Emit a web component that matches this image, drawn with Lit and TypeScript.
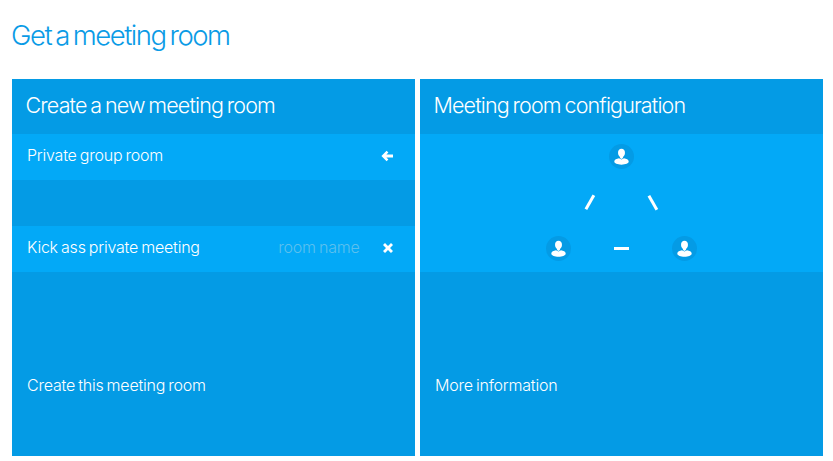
import { LitElement, html, css } from "lit";
import { customElement } from "lit/decorators.js";

const avatar = html`<svg class="avatar" viewBox="0 0 26 26" aria-hidden="true">
  <circle cx="13" cy="13" r="13" fill="#049be5"></circle>
  <path fill="#fff" d="M13 5c2.400 0 3.600 1.800 3.600 4 0 2-.9 3.700-2.100 4.500v1.100L13 15.500l-1.500-.9v-1.100C10.300 12.700 9.400 11 9.400 9c0-2.200 1.200-4 3.600-4zM10.400 14.800l2.600 1.400 2.600-1.400c2.400.4 4.900 1.500 4.900 3.500 0 2-3.200 3.200-7.500 3.200s-7.500-1.200-7.500-3.200c0-2 2.500-3.100 4.900-3.500z"></path>
</svg>`;

@customElement("app-root")
export class AppRoot extends LitElement {
  static styles = css`
    :host {
      display: block;
      background: #fff;
      font-family: "Inter", "Liberation Sans", sans-serif;
      font-weight: 300;
      color: #fff;
      height: 461px;
      overflow: hidden;
    }
    h1 {
      margin: 0;
      padding: 18px 0 0 11px;
      height: 79px;
      box-sizing: border-box;
      font-size: 27.5px;
      line-height: 34px;
      font-weight: 300;
      letter-spacing: -1.5px;
      word-spacing: -2.2px;
      color: #0a9be6;
    }
    .panels {
      display: grid;
      grid-template-columns: 403px 403px;
      gap: 5px;
      padding-left: 12px;
    }
    .panel {
      background: #049be5;
      height: 377px;
      display: flex;
      flex-direction: column;
    }
    h2 {
      margin: 0;
      height: 55px;
      padding-left: 13.5px;
      font-size: 21.5px;
      line-height: 53px;
      font-weight: 300;
      letter-spacing: -0.85px;
      word-spacing: -1.5px;
    }
    .rows {
      display: grid;
      grid-template-rows: repeat(3, 46px);
    }
    .row {
      display: flex;
      align-items: center;
      box-sizing: border-box;
      padding: 0 21.5px 2px 15px;
      font-size: 16px;
      letter-spacing: -0.22px;
      word-spacing: -1.1px;
    }
    .bright { background: #03a9f7; }
    .grow { flex: 1; margin-bottom: 2px; }
    input {
      width: 84px;
      margin: 0 22px 2px 0;
      padding: 0;
      border: 0;
      background: none;
      outline: none;
      font: inherit;
      letter-spacing: inherit;
      word-spacing: inherit;
      text-align: right;
      color: #fff;
    }
    input::placeholder { color: #5cc0ee; opacity: 1; }
    .icon { width: 12px; height: 12px; display: block; }
    .arrow { margin-right: 0.5px; }
    .diagram {
      height: 138px;
      background: #03a9f7;
      display: grid;
      grid-template-columns: repeat(5, 31.5px);
      grid-template-rows: repeat(3, 46px);
      justify-content: center;
      place-items: center;
    }
    .diagram > * { margin-bottom: 2px; }
    .avatar { width: 25px; height: 25px; display: block; }
    .top { grid-column: 3; grid-row: 1; }
    .left { grid-column: 1; grid-row: 3; }
    .right { grid-column: 5; grid-row: 3; }
    .link-left { grid-column: 2; grid-row: 2; }
    .link-right { grid-column: 4; grid-row: 2; }
    .link-bottom { grid-column: 3; grid-row: 3; }
    .link {
      width: 15.5px;
      height: 3px;
      background: #fff;
    }
    .link-left { transform: rotate(-60deg); }
    .link-right { transform: rotate(60deg); }
    .foot {
      flex: 1;
      padding: 103px 15px 0;
      font-size: 16px;
      line-height: 20px;
      letter-spacing: -0.22px;
      word-spacing: -1.1px;
    }
  `;

  render() {
    return html`
      <h1>Get a meeting room</h1>
      <div class="panels">
        <section class="panel">
          <h2>Create a new meeting room</h2>
          <div class="rows">
            <div class="row bright">
              <span class="grow">Private group room</span>
              <svg class="icon arrow" viewBox="0 0 12 12" aria-hidden="true">
                <path fill="#fff" d="M5.600 .8 7.400 2.600 5.400 4.400H12v3.200H5.400L7.400 9.400 5.600 11.200 .4 6z"></path>
              </svg>
            </div>
            <div class="row"></div>
            <div class="row bright">
              <span class="grow">Kick ass private meeting</span>
              <input placeholder="room name" aria-label="room name" />
              <svg class="icon" viewBox="0 0 12 12" aria-hidden="true">
                <path fill="#fff" d="M3 1 6 4 9 1 11 3 8 6 11 9 9 11 6 8 3 11 1 9 4 6 1 3z"></path>
              </svg>
            </div>
          </div>
          <div class="foot">Create this meeting room</div>
        </section>
        <section class="panel">
          <h2>Meeting room configuration</h2>
          <div class="diagram">
            <div class="top">${avatar}</div>
            <div class="link link-left"></div>
            <div class="link link-right"></div>
            <div class="left">${avatar}</div>
            <div class="link link-bottom"></div>
            <div class="right">${avatar}</div>
          </div>
          <div class="foot">More information</div>
        </section>
      </div>
    `;
  }
}
